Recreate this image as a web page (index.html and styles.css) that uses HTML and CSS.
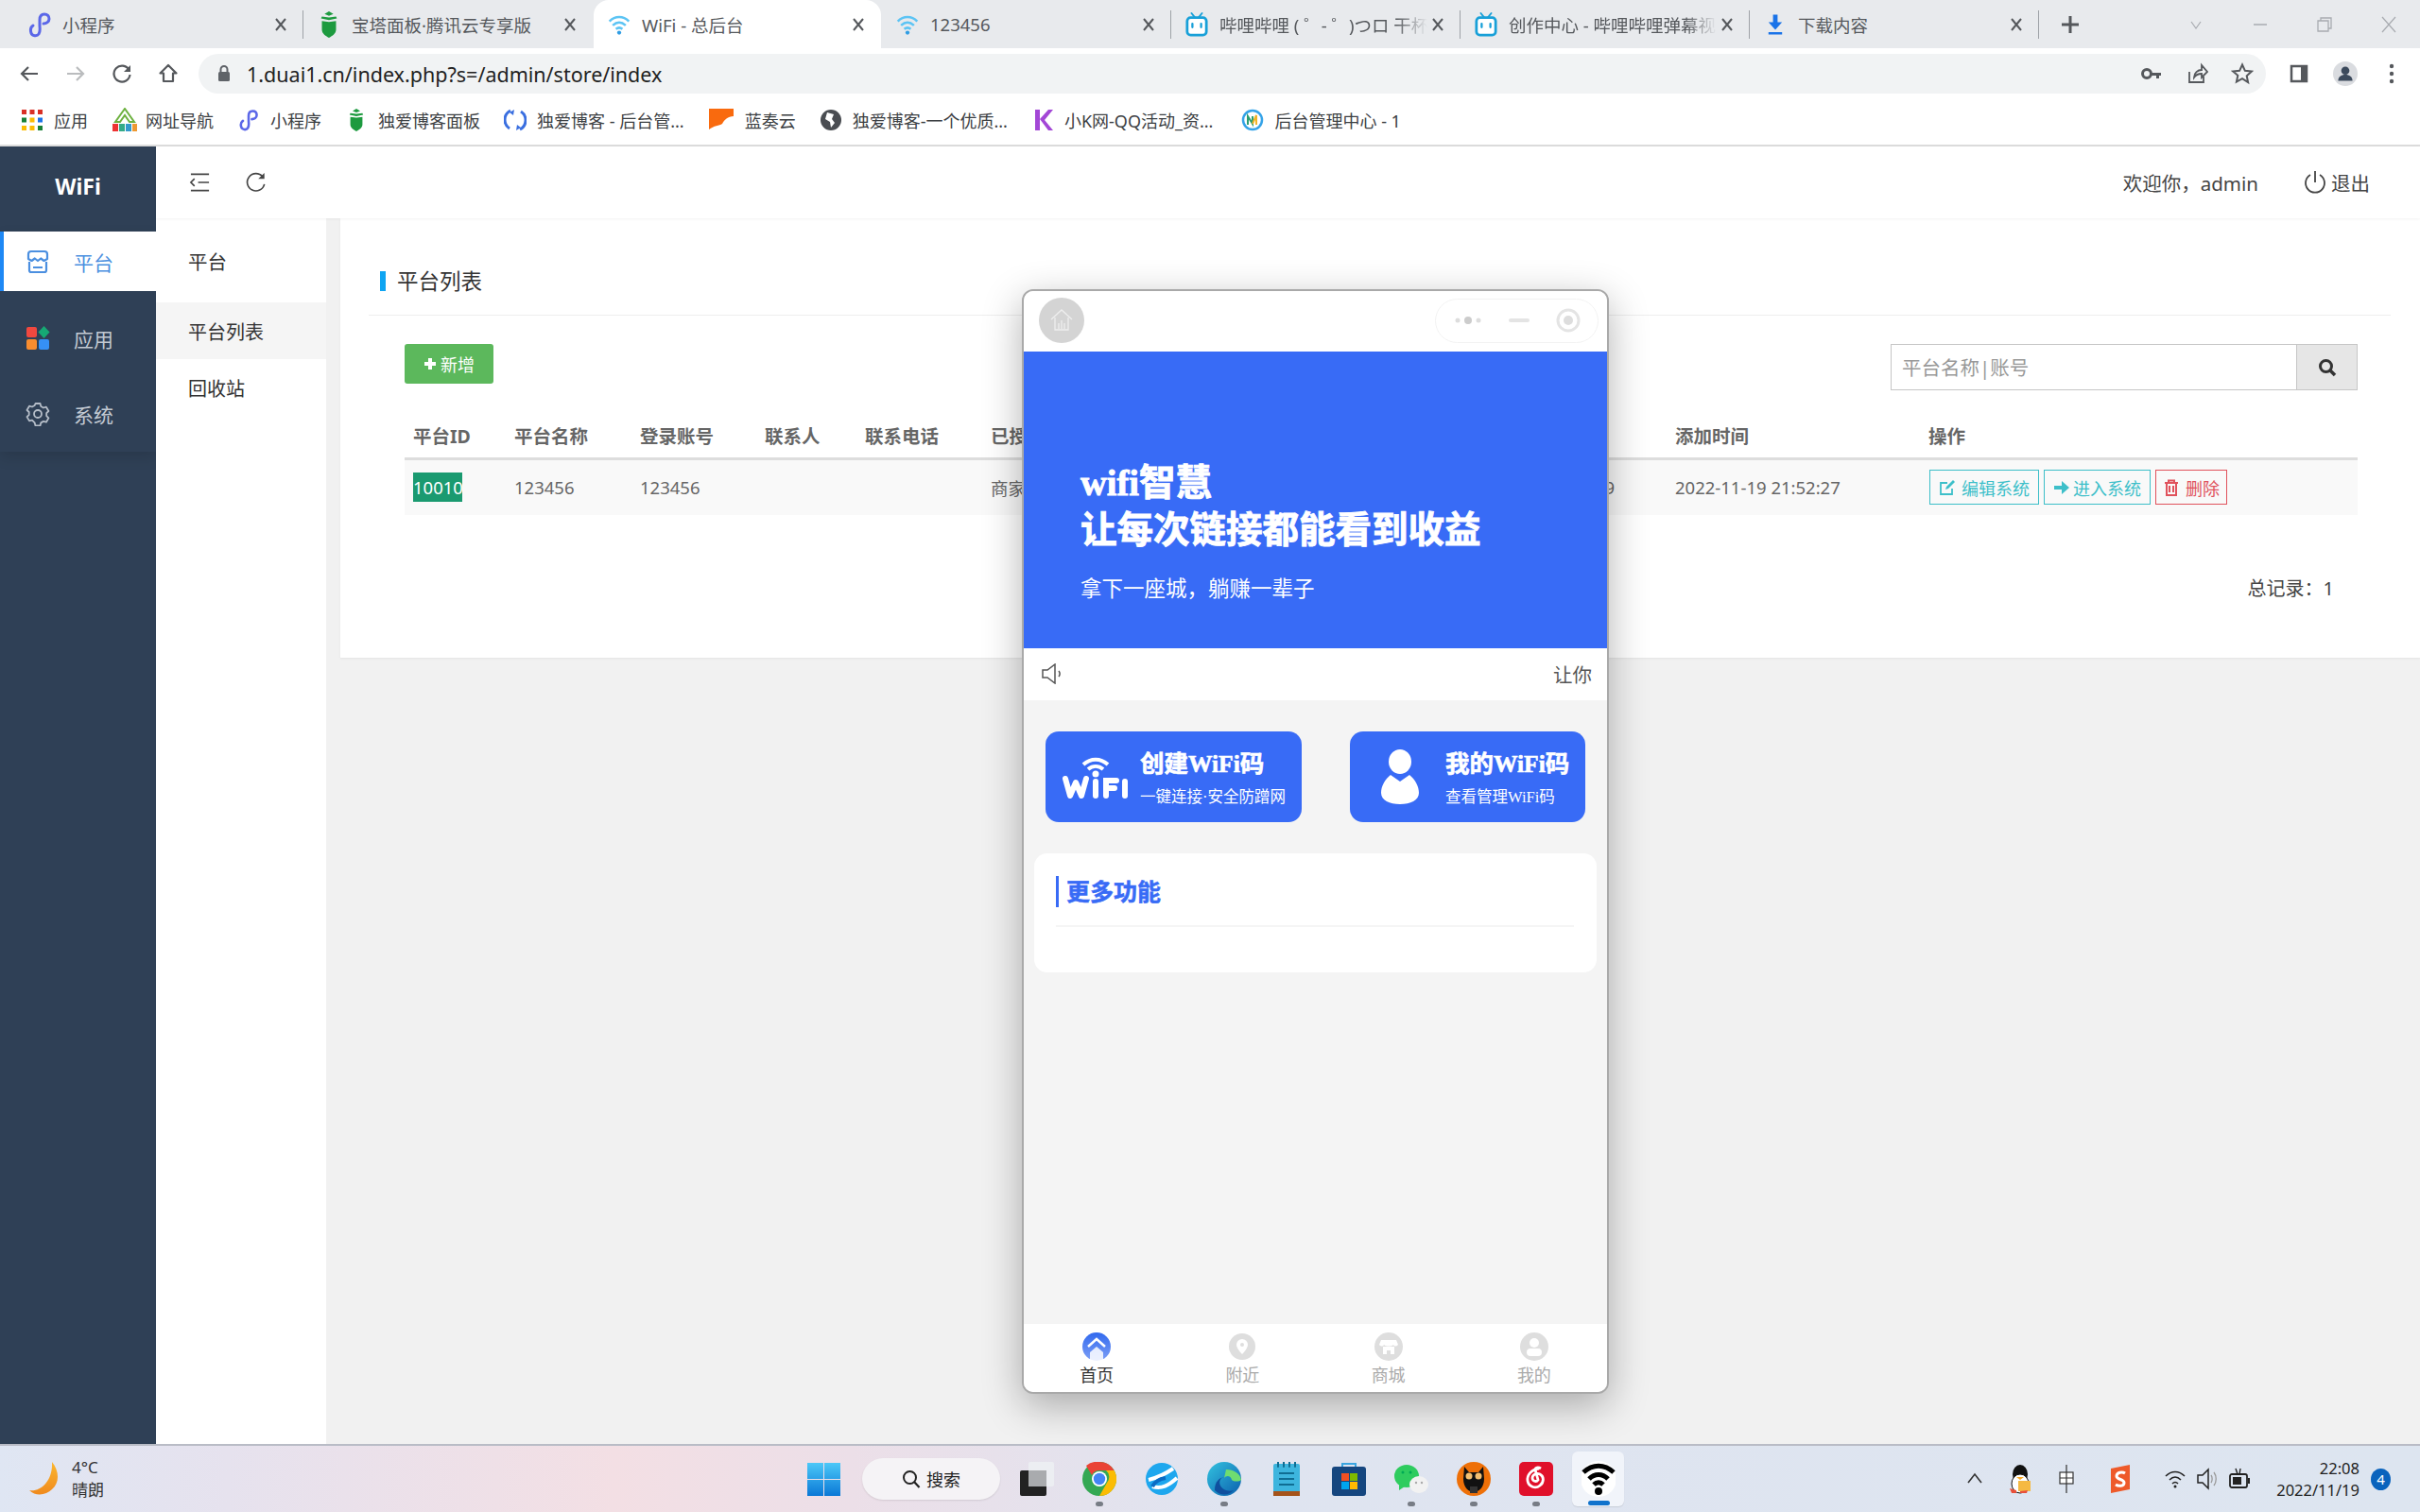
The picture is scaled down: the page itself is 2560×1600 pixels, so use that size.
FILE: index.html
```html
<!DOCTYPE html>
<html lang="zh-CN">
<head>
<meta charset="utf-8">
<title>WiFi - 总后台</title>
<link rel="stylesheet" href="styles.css">
</head>
<body>
<svg class="defs" width="0" height="0">
  <symbol id="x" viewBox="0 0 14 14"><path d="M2 1l10 12M12 1L2 13" fill="none" stroke="#55585c" stroke-width="2"/></symbol>
  <symbol id="mp" viewBox="0 0 24 28"><path d="M5 15c-3 2-3 5-2 8s6 4 8 1 1-6 1-9V9c0-4 2-6 5-6s5 2 5 5-3 5-6 5" fill="none" stroke="#5b67e8" stroke-width="3" stroke-linecap="round"/></symbol>
  <symbol id="shield" viewBox="0 0 24 30"><path d="M12 0l5 3-5 2-5-2zM4 6l8 1 8-1 1 2-9 2-9-2zM4 11l8 1 8-1v10c0 4-4 7-8 9-4-2-8-5-8-9z" fill="#1d9a3f"/></symbol>
  <symbol id="wifi" viewBox="0 0 28 26"><path d="M2 9c7-7 17-7 24 0M6 14c5-4.500 11-4.500 16 0M10 18.500c2.500-2 5.500-2 8 0" fill="none" stroke="#5cc4f4" stroke-width="3"/><circle cx="14" cy="23" r="2.500" fill="#2f9de4"/></symbol>
  <symbol id="bili" viewBox="0 0 26 28"><path d="M7 1l4 5M19 1l-4 5" stroke="#18a0d8" stroke-width="2" stroke-linecap="round"/><rect x="2" y="6" width="22" height="20" rx="4" fill="#fff" stroke="#18a0d8" stroke-width="3"/><path d="M8 13v4M18 13v4" stroke="#18a0d8" stroke-width="2.500" stroke-linecap="round"/></symbol>
</svg>

<div class="browser">
  <div class="tabstrip">
    <div class="tab"><svg class="favicon"><use href="#mp"/></svg><span class="tab-title">小程序</span><svg class="tab-x"><use href="#x"/></svg></div>
    <i class="tab-sep"></i>
    <div class="tab"><svg class="favicon"><use href="#shield"/></svg><span class="tab-title">宝塔面板·腾讯云专享版</span><svg class="tab-x"><use href="#x"/></svg></div>
    <div class="tab tab-active"><svg class="favicon"><use href="#wifi"/></svg><span class="tab-title">WiFi - 总后台</span><svg class="tab-x"><use href="#x"/></svg></div>
    <div class="tab"><svg class="favicon"><use href="#wifi"/></svg><span class="tab-title">123456</span><svg class="tab-x"><use href="#x"/></svg></div>
    <i class="tab-sep"></i>
    <div class="tab"><svg class="favicon"><use href="#bili"/></svg><span class="tab-title tab-fade">哔哩哔哩 ( ゜- ゜)つロ 干杯</span><svg class="tab-x"><use href="#x"/></svg></div>
    <i class="tab-sep"></i>
    <div class="tab"><svg class="favicon"><use href="#bili"/></svg><span class="tab-title tab-fade">创作中心 - 哔哩哔哩弹幕视</span><svg class="tab-x"><use href="#x"/></svg></div>
    <i class="tab-sep"></i>
    <div class="tab"><svg class="favicon" viewBox="-3 -3 30 34"><path d="M9 1h6v10h6l-9 10-9-10h6zM3 24h18v3H3z" fill="#1a73e8"/></svg><span class="tab-title">下载内容</span><svg class="tab-x"><use href="#x"/></svg></div>
    <i class="tab-sep"></i>
    <svg class="new-tab" viewBox="0 0 20 20"><path d="M10 1v18M1 10h18" stroke="#55585c" stroke-width="3"/></svg>
    <div class="win-controls">
      <svg viewBox="0 0 20 20"><path d="M5 7l5 7 5-7" fill="none" stroke="#a8abb0" stroke-width="1.200"/></svg>
      <svg viewBox="0 0 20 20"><path d="M3 10h14" stroke="#a8abb0" stroke-width="1.500"/></svg>
      <svg viewBox="0 0 20 20"><path d="M3 6h11v11H3zM6 6V3h11v11h-3" fill="none" stroke="#a8abb0" stroke-width="1.300"/></svg>
      <svg viewBox="0 0 20 20"><path d="M3 2l14 16M17 2L3 18" stroke="#a8abb0" stroke-width="1.200"/></svg>
    </div>
  </div>

  <div class="toolbar">
    <svg class="tool" viewBox="0 0 24 24"><path d="M21 12H4M11 5l-7 7 7 7" fill="none" stroke="#55585c" stroke-width="2.200"/></svg>
    <svg class="tool" viewBox="0 0 24 24"><path d="M3 12h17M13 5l7 7-7 7" fill="none" stroke="#babcbe" stroke-width="2.200"/></svg>
    <svg class="tool" viewBox="0 0 24 24"><path d="M19.500 8A8.500 8.500 0 1 0 20.500 13" fill="none" stroke="#55585c" stroke-width="2.200"/><path d="M21 3v7h-7z" fill="#55585c"/></svg>
    <svg class="tool" viewBox="0 0 24 24"><path d="M12 3L3.500 11.500H7V20h10v-8.500h3.500z" fill="none" stroke="#55585c" stroke-width="2.200" stroke-linejoin="round"/></svg>
    <div class="omnibox">
      <svg class="lock" viewBox="0 0 16 20"><path d="M4.500 8V5.500a3.500 3.500 0 0 1 7 0V8" fill="none" stroke="#5f6368" stroke-width="2"/><rect x="2" y="8" width="12" height="10" rx="1.500" fill="#5f6368"/></svg>
      <span class="url">1.duai1.cn/index.php?s=/admin/store/index</span>
      <svg class="omni-icon" viewBox="0 0 24 24"><circle cx="7" cy="12" r="4.500" fill="none" stroke="#55585c" stroke-width="3"/><path d="M11 11h11v3h-2v3h-3v-3h-6z" fill="#55585c"/></svg>
      <svg class="omni-icon" viewBox="0 0 24 24"><path d="M4 10v11h15v-6M9 16c0-5 4-8 8-8V3l6 7-6 6v-4c-3 0-6 1-8 4z" fill="none" stroke="#55585c" stroke-width="1.800"/></svg>
      <svg class="omni-icon" viewBox="0 0 24 24"><path d="M12 2.500l2.900 6.300 6.900.8-5.100 4.700 1.400 6.800L12 17.200 5.900 20.600l1.400-6.800L2.200 9.600l6.900-.8z" fill="none" stroke="#55585c" stroke-width="2"/></svg>
    </div>
    <svg class="tool" viewBox="0 0 24 24"><rect x="4" y="4" width="16" height="16" fill="none" stroke="#55585c" stroke-width="2.500"/><rect x="14" y="4" width="6" height="16" fill="#55585c"/></svg>
    <svg class="tool tool-avatar" viewBox="0 0 24 24"><circle cx="12" cy="12" r="12" fill="#dadce0"/><circle cx="12" cy="9" r="4" fill="#3c4a5c"/><path d="M5 19c0-4 3-6 7-6s7 2 7 6z" fill="#3c4a5c"/></svg>
    <svg class="tool" viewBox="0 0 24 24"><circle cx="12" cy="4" r="2.200" fill="#55585c"/><circle cx="12" cy="12" r="2.200" fill="#55585c"/><circle cx="12" cy="20" r="2.200" fill="#55585c"/></svg>
  </div>

  <div class="bookmarks">
    <a class="bm"><svg class="bm-icon" viewBox="0 0 24 24"><g fill="#d93025"><rect x="1" y="1" width="5" height="5"/><rect x="9.500" y="1" width="5" height="5"/><rect x="18" y="1" width="5" height="5"/></g><g fill="#188038"><rect x="1" y="9.500" width="5" height="5"/></g><g fill="#fbbc04"><rect x="9.500" y="9.500" width="5" height="5"/><rect x="1" y="18" width="5" height="5"/><rect x="9.500" y="18" width="5" height="5"/></g><rect x="18" y="9.500" width="5" height="5" fill="#1a73e8"/><rect x="18" y="18" width="5" height="5" fill="#188038"/></svg>应用</a>
    <a class="bm bm-tight"><svg class="bm-icon bm-wide" viewBox="0 0 28 26"><path d="M14 1L4 15h5l5-7 5 7h5z" fill="none" stroke="#6db13f" stroke-width="2"/><rect x="1" y="17" width="6" height="8" fill="#e33"/><rect x="8" y="17" width="6" height="8" fill="#3a8"/><rect x="15" y="17" width="6" height="8" fill="#39c"/><rect x="22" y="17" width="5" height="8" fill="#e93"/></svg>网址导航</a>
    <a class="bm"><svg class="bm-icon"><use href="#mp"/></svg>小程序</a>
    <a class="bm"><svg class="bm-icon"><use href="#shield"/></svg>独爱博客面板</a>
    <a class="bm"><svg class="bm-icon" viewBox="0 0 24 24"><path d="M7 2A11 11 0 0 0 6 21M17 22a11 11 0 0 0 1-19" fill="none" stroke="#3a6fe0" stroke-width="3"/><path d="M11 1l-5 3 4 3zM13 23l5-3-4-3z" fill="#3a6fe0"/></svg>独爱博客 - 后台管...</a>
    <a class="bm"><svg class="bm-icon bm-wide" viewBox="0 0 28 26"><path d="M1 1h26v8c-6 0-10 4-12 8-3 2-9 2-14 6z" fill="#f96a0e"/></svg>蓝奏云</a>
    <a class="bm"><svg class="bm-icon" viewBox="0 0 24 24"><circle cx="12" cy="12" r="11" fill="#4a4d52"/><path d="M8 4l7 2-2 5 3 4-4 5-1-6-5-3z" fill="#fff"/></svg>独爱博客-一个优质...</a>
    <a class="bm"><svg class="bm-icon" viewBox="0 0 24 24"><path d="M4 1h5v22H4zM9 11l9-10h5L14 12l9 11h-5z" fill="#a347d6"/></svg>小K网-QQ活动_资...</a>
    <a class="bm bm-last"><svg class="bm-icon" viewBox="0 0 24 24"><circle cx="12" cy="12" r="10" fill="none" stroke="#35a3e8" stroke-width="2.500"/><path d="M7 17V8l5 8V8" fill="none" stroke="#2a9d70" stroke-width="2"/><path d="M12 16l4-9v10" fill="none" stroke="#f0b429" stroke-width="2"/></svg>后台管理中心 - 1</a>
  </div>
</div>

<div class="app">
  <aside class="sidebar">
    <div class="logo">WiFi</div>
    <div class="side-group">
      <a class="side-item side-active">
        <svg class="side-icon" viewBox="0 0 24 26"><path d="M5 2h14a3 3 0 0 1 3 3v5l-3.500 2-3.300-2.500L12 12 8.800 9.500 5.500 12 2 10V5a3 3 0 0 1 3-3zM3 13v9a2 2 0 0 0 2 2h14a2 2 0 0 0 2-2v-9M7 19h10" fill="none" stroke="#4b8fe0" stroke-width="2.200" stroke-linejoin="round"/></svg>
        <span>平台</span>
      </a>
      <a class="side-item">
        <svg class="side-icon" viewBox="0 0 26 26"><rect x="1" y="1" width="11" height="11" rx="2" fill="#f1483f"/><path d="M19.500 0l6 6.500-6 6.500-6-6.500z" fill="#16a974"/><rect x="1" y="14" width="11" height="11" rx="2" fill="#f98d2f"/><rect x="14" y="14" width="11" height="11" rx="2" fill="#3690f5"/></svg>
        <span>应用</span>
      </a>
      <a class="side-item">
        <svg class="side-icon" viewBox="0 0 26 26"><path d="M10.500 2h5l.8 3 2.600 1.500 3-.8 2.500 4.300-2.200 2.200v3l2.200 2.200-2.500 4.300-3-.8-2.600 1.500-.8 3h-5l-.8-3L7 19.600l-3 .8-2.500-4.300L3.700 14v-3L1.500 9 4 4.700l3 .8 2.700-1.500z" fill="none" stroke="#b5bdc8" stroke-width="1.800" stroke-linejoin="round"/><circle cx="13" cy="13" r="4" fill="none" stroke="#b5bdc8" stroke-width="1.800"/></svg>
        <span>系统</span>
      </a>
    </div>
  </aside>

  <div class="main">
    <header class="topbar">
      <svg class="top-icon" viewBox="0 0 24 22"><path d="M2 2h20M10 11h12M2 20h20M6 7l-4 4 4 4" fill="none" stroke="#444" stroke-width="1.700"/></svg>
      <svg class="top-icon" viewBox="0 0 24 24"><path d="M20 5.500A10 10 0 1 0 22 14" fill="none" stroke="#444" stroke-width="1.800"/><path d="M22 1v7h-7z" fill="#444"/></svg>
      <span class="welcome">欢迎你，admin</span>
      <a class="logout"><svg viewBox="0 0 24 26"><path d="M7 5a10 10 0 1 0 10 0M12 1v12" fill="none" stroke="#444" stroke-width="1.800"/></svg>退出</a>
    </header>

    <div class="work">
      <nav class="subnav">
        <div class="sub-head">平台</div>
        <a class="sub-item sub-active">平台列表</a>
        <a class="sub-item">回收站</a>
      </nav>

      <div class="content">
        <section class="card">
          <div class="card-title"><span>平台列表</span></div>
          <div class="card-body">
            <div class="actions">
              <a class="btn-add"><svg viewBox="0 0 14 14"><path d="M7 1v12M1 7h12" stroke="#fff" stroke-width="4"/></svg>新增</a>
              <div class="search">
                <input class="search-input" placeholder="平台名称|账号">
                <a class="search-btn"><svg viewBox="0 0 20 20"><circle cx="8.500" cy="8.500" r="6" fill="none" stroke="#333" stroke-width="3"/><path d="M13 13l5 5" stroke="#333" stroke-width="3.500"/></svg></a>
              </div>
            </div>
            <table class="grid">
              <colgroup><col class="c1"><col class="c2"><col class="c3"><col class="c4"><col class="c5"><col class="c6"><col class="c7"><col class="c8"><col></colgroup>
              <thead>
                <tr><th>平台ID</th><th>平台名称</th><th>登录账号</th><th>联系人</th><th>联系电话</th><th>已授权应用</th><th></th><th>添加时间</th><th>操作</th></tr>
              </thead>
              <tbody>
                <tr>
                  <td><span class="id-mark">10010</span></td><td>123456</td><td>123456</td><td></td><td></td><td>商家</td><td class="td-end">9</td><td>2022-11-19 21:52:27</td>
                  <td><div class="ops">
                    <a class="op op-edit"><svg viewBox="0 0 18 18"><path d="M14 10v6H2V4h7" fill="none" stroke="#3dbfc9" stroke-width="1.800"/><path d="M7 11l1-3 7-7 2 2-7 7z" fill="#3dbfc9"/></svg>编辑系统</a>
                    <a class="op op-enter"><svg viewBox="0 0 18 18"><path d="M1 7h8V2l8 7-8 7v-5H1z" fill="#3dbfc9"/></svg>进入系统</a>
                    <a class="op op-del"><svg viewBox="0 0 18 18"><path d="M2 4h14M6 4V1.500h6V4M4 4v13h10V4" fill="none" stroke="#e0525c" stroke-width="2"/><path d="M7 7v7M11 7v7" stroke="#e0525c" stroke-width="2"/></svg>删除</a>
                  </div></td>
                </tr>
              </tbody>
            </table>
            <div class="total">总记录：1</div>
          </div>
        </section>
      </div>
    </div>
  </div>
</div>

<div class="phone">
  <div class="ph-head">
    <div class="ph-home"><svg viewBox="0 0 30 30"><path d="M4 14L15 4l11 10M8 12v13h14V12M8 25h14M12 24v-6M15 24v-9M18 24v-6" fill="none" stroke="#eee" stroke-width="1.300"/></svg></div>
    <div class="ph-capsule">
      <svg viewBox="0 0 30 12"><circle cx="4" cy="6" r="2.500" fill="#ddd"/><circle cx="15" cy="6" r="4" fill="#ccc"/><circle cx="26" cy="6" r="2.500" fill="#ddd"/></svg>
      <i class="cap-line"></i>
      <svg viewBox="0 0 26 26"><circle cx="13" cy="13" r="11" fill="none" stroke="#e4e4e4" stroke-width="3"/><circle cx="13" cy="13" r="5" fill="#ddd"/></svg>
    </div>
  </div>
  <div class="ph-banner">
    <h1>wifi智慧<br>让每次链接都能看到收益</h1>
    <p>拿下一座城，躺赚一辈子</p>
  </div>
  <div class="ph-notice">
    <svg viewBox="0 0 24 22"><path d="M1 7h5l8-6v20l-8-6H1z" fill="none" stroke="#555" stroke-width="1.500"/><path d="M18 8c1.500 2 1.500 4 0 6" fill="none" stroke="#555" stroke-width="1.500"/></svg>
    <span>让你</span>
  </div>
  <div class="ph-body">
    <div class="ph-btns">
      <a class="ph-btn ph-btn-a">
        <svg class="wifi-word" viewBox="0 0 70 46"><path d="M22 9c8-7 18-7 26 0M27 14c5-4 11-4 16 0" fill="none" stroke="#fff" stroke-width="4"/><circle cx="35" cy="19" r="3.500" fill="#fff"/><path d="M3 24l5 18 6-14 6 14 5-18" fill="none" stroke="#fff" stroke-width="6" stroke-linejoin="round" stroke-linecap="round"/><path d="M35 27v15M46 42V26h11M46 34h9M66 27v15" fill="none" stroke="#fff" stroke-width="6" stroke-linecap="round"/></svg>
        <span class="ph-btn-text"><b>创建WiFi码</b><small>一键连接·安全防蹭网</small></span>
      </a>
      <a class="ph-btn ph-btn-b">
        <svg class="person" viewBox="0 0 40 58"><ellipse cx="20" cy="13" rx="12" ry="13" fill="#fff"/><path d="M10 27l10 7 10-7c6 5 10 12 10 19 0 8-9 12-20 12S0 54 0 46c0-7 4-14 10-19z" fill="#fff"/></svg>
        <span class="ph-btn-text"><b>我的WiFi码</b><small>查看管理WiFi码</small></span>
      </a>
    </div>
    <div class="ph-card">
      <div class="ph-card-title"><span>更多功能</span></div>
    </div>
  </div>
  <div class="ph-tabs">
    <a class="ph-tab ph-tab-on">
      <svg viewBox="0 0 30 30"><defs><linearGradient id="g" x1="0" y1="0" x2="0" y2="1"><stop offset="0" stop-color="#3169ee"/><stop offset="1" stop-color="#7fa0f6"/></linearGradient></defs><circle cx="15" cy="15" r="15" fill="url(#g)"/><path d="M6 15l9-8 9 8" fill="none" stroke="#fff" stroke-width="2.500"/><path d="M8 21l7-6 7 6v9H8z" fill="#fff" opacity=".85"/></svg>
      <span>首页</span>
    </a>
    <a class="ph-tab">
      <svg viewBox="0 0 30 30"><circle cx="15" cy="15" r="14" fill="#dedede"/><path d="M15 7a6 6 0 0 1 6 6c0 4-6 10-6 10s-6-6-6-10a6 6 0 0 1 6-6z" fill="#fff"/><circle cx="15" cy="13" r="2" fill="#dedede"/></svg>
      <span>附近</span>
    </a>
    <a class="ph-tab">
      <svg viewBox="0 0 30 30"><circle cx="15" cy="15" r="15" fill="#dedede"/><path d="M7 8h16l2 5c-2 2-4 2-5 0-2 2-8 2-10 0-1 2-3 2-5 0zM9 15h12v8h-4v-4h-4v4H9z" fill="#fff"/></svg>
      <span>商城</span>
    </a>
    <a class="ph-tab">
      <svg viewBox="0 0 30 30"><circle cx="15" cy="15" r="15" fill="#dedede"/><circle cx="15" cy="11" r="5" fill="#fff"/><rect x="7" y="17" width="16" height="8" rx="4" fill="#fff"/></svg>
      <span>我的</span>
    </a>
  </div>
</div>

<footer class="taskbar">
  <div class="weather">
    <svg viewBox="0 0 32 36"><defs><linearGradient id="m" x1="0" y1="0" x2="0" y2="1"><stop offset="0" stop-color="#fbb72e"/><stop offset="1" stop-color="#f08a1d"/></linearGradient></defs><path d="M24 0c8 10 8 22 0 29-6 6-17 8-24 1 12 2 25-10 24-30z" fill="url(#m)"/></svg>
    <div class="weather-text"><span>4°C</span><span>晴朗</span></div>
  </div>
  <div class="task-center">
    <svg class="win-logo" viewBox="0 0 35 35"><defs><linearGradient id="w" x1="0" y1="0" x2="0" y2="1"><stop offset="0" stop-color="#4cc8f8"/><stop offset="1" stop-color="#0a78d6"/></linearGradient></defs><path d="M0 0h17v17H0zM18 0h17v17H18zM0 18h17v17H0zM18 18h17v17H18z" fill="url(#w)"/></svg>
    <div class="task-search"><svg viewBox="0 0 20 20"><circle cx="8.500" cy="8.500" r="6.500" fill="none" stroke="#222" stroke-width="2"/><path d="M13 13l5.500 6" stroke="#222" stroke-width="2.200"/></svg>搜索</div>
    <div class="slot"><svg viewBox="0 0 36 36"><rect x="0" y="9" width="28" height="27" rx="2" fill="#222"/><rect x="9" y="0" width="27" height="26" rx="2" fill="#eceef2"/><rect x="9" y="9" width="19" height="17" fill="#a9abae"/></svg></div>
    <div class="slot slot-run"><svg viewBox="0 0 36 36"><circle cx="18" cy="18" r="18" fill="#34a853"/><path d="M18 0a18 18 0 0 1 15.600 9H18A9 9 0 0 0 10 14L4 4A18 18 0 0 1 18 0z" fill="#ea4335"/><path d="M33.600 9A18 18 0 0 1 18 36l8-14a9 9 0 0 0-1-13z" fill="#fbbc04"/><circle cx="18" cy="18" r="8" fill="#fff"/><circle cx="18" cy="18" r="6.200" fill="#4285f4"/></svg></div>
    <div class="slot"><svg viewBox="0 0 36 36"><circle cx="18" cy="18" r="17" fill="#1ea7ee"/><path d="M4 19c8-2 16-5 26-12M8 26c10 3 17-1 26-9" fill="none" stroke="#fff" stroke-width="4"/><path d="M8 26c3-6 8-8 14-9" fill="none" stroke="#0b6cc4" stroke-width="4"/></svg></div>
    <div class="slot slot-run"><svg viewBox="0 0 36 36"><defs><linearGradient id="e" x1="0" y1="0" x2="1" y2="1"><stop offset="0" stop-color="#33c3e0"/><stop offset="1" stop-color="#0b5fad"/></linearGradient></defs><circle cx="18" cy="18" r="18" fill="url(#e)"/><path d="M20 8c8 0 15 4 16 11-2 2-8 2-10 0-1-5-6-5-8-2z" fill="#6fdc70"/><path d="M19 16c-5 0-7 5-5 9s8 7 14 5c-6 6-14 6-20 0 0-9 5-14 11-14z" fill="#0f4f9e"/></svg></div>
    <div class="slot"><svg viewBox="0 0 28 36"><rect x="0" y="2" width="28" height="34" rx="2" fill="#3db5de"/><rect x="0" y="31" width="28" height="5" fill="#a5531a"/><path d="M6 12h16M6 18h16M6 24h16" stroke="#0f6d93" stroke-width="2"/><path d="M5 0v5M11 0v5M17 0v5M23 0v5" stroke="#0f6d93" stroke-width="2" stroke-linecap="round"/></svg></div>
    <div class="slot"><svg viewBox="0 0 36 36"><path d="M11 6V2h14v4" fill="none" stroke="#3aa5e0" stroke-width="2"/><rect x="0" y="5" width="36" height="31" rx="3" fill="#15467f"/><rect x="10" y="12" width="8" height="8" fill="#f25022"/><rect x="19" y="12" width="8" height="8" fill="#7fba00"/><rect x="10" y="21" width="8" height="8" fill="#00a4ef"/><rect x="19" y="21" width="8" height="8" fill="#ffb900"/></svg></div>
    <div class="slot slot-run"><svg viewBox="0 0 36 36"><ellipse cx="13" cy="15" rx="13" ry="12" fill="#2ecc5f"/><path d="M5 24l0 6 6-4z" fill="#2ecc5f"/><circle cx="9" cy="11" r="1.500" fill="#0a5"/><circle cx="17" cy="11" r="1.500" fill="#0a5"/><ellipse cx="26" cy="24" rx="10" ry="9" fill="#f2f2f2"/><circle cx="23" cy="22" r="1.200" fill="#aaa"/><circle cx="29" cy="22" r="1.200" fill="#aaa"/></svg></div>
    <div class="slot slot-run"><svg viewBox="0 0 36 36"><circle cx="18" cy="18" r="18" fill="#ee7008"/><path d="M8 5l5 6h10l5-6 1 13c0 9-6 14-11 14S7 27 7 18z" fill="#111"/><circle cx="13" cy="15" r="3.500" fill="#f4c071"/><circle cx="23" cy="15" r="3.500" fill="#f4c071"/><rect x="14" y="26" width="8" height="7" fill="#333"/></svg></div>
    <div class="slot slot-run"><svg viewBox="0 0 36 36"><rect width="36" height="36" rx="5" fill="#e0102a"/><path d="M21 7c-8 1-13 7-12 13s8 9 13 5 4-10 0-12-8 1-8 4 4 5 6 2l-3-11c0-2 3-3 6-1" fill="none" stroke="#fff" stroke-width="2.800"/></svg></div>
    <div class="slot slot-active"><svg viewBox="0 0 36 40"><circle cx="18" cy="20" r="19" fill="#fff"/><path d="M2 13c10-9 22-9 32 0M8 20c6-6 14-6 20 0M13 26c3-3 7-3 10 0" fill="none" stroke="#000" stroke-width="5"/><circle cx="18" cy="33" r="4" fill="#000"/></svg></div>
  </div>
  <div class="tray">
    <svg class="tray-icon tray-caret" viewBox="0 0 20 20"><path d="M3 14l7-9 7 9" fill="none" stroke="#333" stroke-width="1.600"/></svg>
    <svg class="tray-icon" viewBox="0 0 24 32"><ellipse cx="12" cy="11" rx="8" ry="10" fill="#111"/><ellipse cx="12" cy="21" rx="9" ry="10" fill="#fff" stroke="#111"/><path d="M8 14h8l-4 3z" fill="#f5a623"/><rect x="10" y="18" width="13" height="11" fill="#f5b942"/><path d="M1 26l7 2v3H3zM12 29l8-1-1 3h-7z" fill="#e8503a"/></svg>
    <svg class="tray-icon tray-zh" viewBox="0 0 24 32"><rect x="5" y="9" width="14" height="12" fill="#fff" stroke="#333" stroke-width="1.200"/><path d="M12 1v30M5 15h14" stroke="#333" stroke-width="1.200"/></svg>
    <svg class="tray-icon" viewBox="0 0 24 32"><path d="M2 5l20-4v26L2 31z" fill="#ee5a2a"/><path d="M17 10c-3-2-9-1-9 3s8 3 8 7-6 4-9 2" fill="none" stroke="#fff" stroke-width="3"/></svg>
    <svg class="tray-icon tray-wifi" viewBox="0 0 24 24"><path d="M2 9c6-6 14-6 20 0M6 13c4-4 8-4 12 0M9 17c2-2 4-2 6 0" fill="none" stroke="#222" stroke-width="1.600"/><circle cx="12" cy="20" r="1.500" fill="#222"/></svg>
    <svg class="tray-icon" viewBox="0 0 24 24"><path d="M2 8h5l6-6v20l-6-6H2z" fill="none" stroke="#222" stroke-width="1.500"/><path d="M16 8c1.500 2 1.500 6 0 8M19 5c3 4 3 10 0 14" fill="none" stroke="#999" stroke-width="1.300"/></svg>
    <svg class="tray-icon" viewBox="0 0 24 24"><rect x="2" y="7" width="18" height="14" rx="2" fill="none" stroke="#222" stroke-width="1.800"/><rect x="21" y="11" width="2" height="6" fill="#222"/><rect x="5" y="10" width="9" height="8" fill="#222"/><path d="M8 1l2 6M13 1l-1 6" stroke="#222" stroke-width="1.400"/></svg>
    <div class="clock"><span>22:08</span><span>2022/11/19</span></div>
    <span class="badge">4</span>
  </div>
</footer>
</body>
</html>
```

FILE: styles.css
```css
* { box-sizing: border-box; }
html, body { margin: 0; padding: 0; }
body {
  position: relative;
  width: 2560px;
  height: 1600px;
  overflow: hidden;
  display: flex;
  flex-direction: column;
  background: #f1f1f1;
  color: #444;
  font-family: "Noto Sans", "Noto Sans CJK SC", sans-serif;
}
a { color: inherit; text-decoration: none; }
.defs { position: absolute; }

/* Browser chrome */
.browser { height: 155px; flex: none; background: #fff; border-bottom: 2px solid #dcdcdc; }
.tabstrip { height: 51px; background: #e8eaed; display: flex; align-items: center; padding-left: 15px; }
.tab { width: 306px; height: 51px; display: flex; align-items: center; padding: 0 17px 0 15px; font-size: 18.5px; color: #55585c; flex: none; }
.tab-active { background: #fff; border-radius: 16px 16px 0 0; width: 304px; margin-right: 1px; margin-left: 1px; }
.tab-sep { width: 1px; height: 30px; background: #9ea2a7; flex: none; margin-left: -1px; }
.favicon { width: 24px; height: 28px; flex: none; margin-right: 12px; }
.tab-title { flex: 1; white-space: nowrap; overflow: hidden; }
.tab-fade { -webkit-mask-image: linear-gradient(90deg, #000 85%, transparent); mask-image: linear-gradient(90deg, #000 85%, transparent); }
.tab-x { width: 14px; height: 14px; flex: none; margin-left: 4px; }
.new-tab { width: 20px; height: 20px; margin-left: 23px; flex: none; }
.win-controls { margin-left: auto; display: flex; gap: 48px; padding-right: 23px; }
.win-controls svg { width: 20px; height: 20px; }

.toolbar { height: 49px; display: flex; align-items: center; padding: 5px 6px 0 6px; }
.tool { width: 24px; height: 24px; margin: 0 12.500px; flex: none; }
.tool-avatar { width: 26px; height: 26px; margin: 0 11.500px; }
.omnibox { flex: 1; height: 42px; margin: 0 10px 0 8px; border-radius: 21px; background: #f1f3f4; display: flex; align-items: center; padding: 0 13px 0 19px; }
.lock { width: 16px; height: 20px; }
.url { flex: 1; margin-left: 16px; font-size: 21.500px; color: #222; }
.omni-icon { width: 24px; height: 24px; margin-left: 24px; }

.bookmarks { height: 53px; display: flex; align-items: center; gap: 25px; padding-left: 22px; font-size: 18px; color: #3c4043; white-space: nowrap; }
.bm { display: flex; align-items: center; gap: 11px; }
.bm-tight { gap: 8px; }
.bm-last { margin-left: 5px; }
.bm-icon { width: 24px; height: 24px; flex: none; }
.bm-wide { width: 28px; height: 26px; }

/* Admin shell */
.app { flex: 1; display: flex; min-height: 0; }
.sidebar { width: 165px; flex: none; background: #2f4056; }
.logo { height: 90px; display: flex; align-items: center; justify-content: center; padding-bottom: 6px; color: #fff; font-size: 23px; font-weight: 700; }
.side-group { padding-bottom: 10px; box-shadow: 0 6px 14px rgba(0, 0, 0, .12); display: flex; flex-direction: column; gap: 20px; }
.side-item { height: 60px; display: flex; align-items: center; padding-left: 27px; color: #c2c9d2; font-size: 21px; gap: 25px; }
.side-active { height: 63px; background: #fff; color: #4b8fe0; border-left: 4px solid #1e88f5; padding-left: 23px; }
.side-icon { width: 26px; height: 26px; flex: none; }

.main { flex: 1; display: flex; flex-direction: column; min-width: 0; }
.topbar { height: 76px; flex: none; background: #fff; display: flex; align-items: center; padding: 0 53px 0 35px; box-shadow: 0 1px 3px rgba(0, 0, 0, .05); position: relative; color: #444; font-size: 20.500px; }
.top-icon { width: 23px; height: 22px; margin-right: 36px; }
.welcome { margin-left: auto; }
.logout { margin-left: 48px; display: flex; align-items: center; gap: 5px; }
.logout svg { width: 24px; height: 26px; }

.work { flex: 1; display: flex; min-height: 0; }
.subnav { width: 180px; flex: none; background: #fff; font-size: 20px; color: #333; }
.sub-head { height: 89px; display: flex; align-items: center; padding: 1px 0 0 34px; font-size: 20.500px; }
.sub-item { height: 60px; display: flex; align-items: center; padding-left: 34px; }
.sub-active { background: #f5f5f5; }
.content { flex: 1; padding-left: 15px; min-width: 0; }
.card { background: #fff; height: 465px; box-shadow: 0 1px 2px rgba(0, 0, 0, .06); }
.card-title { margin: 0 31px 0 30px; padding: 56px 0 25px 12px; border-bottom: 1px solid #eee; }
.card-title span { display: block; border-left: 6px solid #0fa5f2; padding-left: 12px; font-size: 22.500px; line-height: 21px; color: #333; }
.card-body { padding: 30px 66px 0 68px; }
.actions { display: flex; justify-content: space-between; align-items: flex-start; }
.btn-add { width: 94px; height: 42px; border-radius: 3px; background: #5cb85c; color: #fff; font-size: 18px; display: flex; align-items: center; justify-content: center; gap: 4px; }
.btn-add svg { width: 14px; height: 14px; }
.search { display: flex; width: 494px; height: 49px; border: 1px solid #c6c6c6; }
.search-input { flex: 1; min-width: 0; border: 0; padding: 0 11px; font: inherit; font-size: 20.500px; background: #fff; }
.search-input::placeholder { color: #999; }
.search-btn { width: 64px; background: #e6e6e6; border-left: 1px solid #c6c6c6; display: flex; align-items: center; justify-content: center; }
.search-btn svg { width: 20px; height: 20px; }

.grid { width: 2066px; margin-top: 26px; border-collapse: collapse; table-layout: fixed; font-size: 18.500px; color: #666; }
.grid th { height: 46px; padding: 0 0 2px 9px; text-align: left; font-size: 19.500px; font-weight: 700; color: #666; border-bottom: 3px solid #ddd; white-space: nowrap; overflow: hidden; }
.grid td { height: 60px; padding: 0 0 0 9px; background: #f9f9f9; white-space: nowrap; vertical-align: middle; }
.c1 { width: 107px; } .c2 { width: 133px; } .c3 { width: 132px; } .c4 { width: 106px; } .c5 { width: 133px; }
.c6 { width: 361px; } .c7 { width: 363px; } .c8 { width: 268px; }
.grid .td-end { text-align: right; padding-right: 55px; }
.id-mark { display: block; width: 52px; height: 31px; line-height: 31px; background: #1a9a70; color: #fff; overflow: hidden; }
.ops { display: flex; gap: 5px; padding-left: 1px; }
.op { height: 37px; border: 1px solid; display: flex; align-items: center; justify-content: center; gap: 6px; font-size: 18px; color: #3dbfc9; }
.op svg { width: 18px; height: 18px; flex: none; }
.op-edit { width: 116px; }
.op-enter { width: 113px; gap: 3px; }
.op-del { width: 76px; color: #e0525c; }
.total { margin-top: 63px; line-height: 30px; text-align: right; padding-right: 25px; font-size: 20px; color: #444; }

/* Phone preview window, floating over the admin page */
.phone { position: absolute; left: 1081px; top: 306px; width: 621px; height: 1169px; border: 2px solid #a9a9a9; border-radius: 12px; background: #f4f4f4; overflow: hidden; display: flex; flex-direction: column; box-shadow: 0 12px 42px rgba(0, 0, 0, .3); }
.ph-head { height: 64px; flex: none; background: #fff; display: flex; align-items: center; justify-content: space-between; padding: 0 9px 2px 16px; }
.ph-home { width: 48px; height: 48px; border-radius: 50%; background: #d4d4d4; display: flex; align-items: center; justify-content: center; }
.ph-home svg { width: 30px; height: 30px; }
.ph-capsule { width: 173px; height: 47px; border: 1px solid #f2f2f2; border-radius: 24px; display: flex; align-items: center; justify-content: space-between; padding: 0 18px 0 19px; }
.ph-capsule svg:first-child { width: 30px; height: 12px; }
.ph-capsule svg:last-child { width: 26px; height: 26px; }
.cap-line { width: 22px; height: 4px; background: #e4e4e4; border-radius: 2px; }
.ph-banner { height: 314px; flex: none; background: #386bf6; color: #fff; padding: 114px 0 0 60px; }
.ph-banner h1 { margin: 0; font-family: "Liberation Serif", "Noto Sans CJK SC", serif; font-size: 38.500px; line-height: 50px; font-weight: 700; -webkit-text-stroke: .9px #fff; }
.ph-banner p { margin: 19px 0 0; font-size: 22.500px; line-height: 32px; font-family: "Noto Sans CJK SC", sans-serif; }
.ph-notice { height: 55px; flex: none; background: #fff; display: flex; align-items: center; justify-content: space-between; padding: 0 16px 2px 19px; font-size: 20.500px; color: #555; }
.ph-notice svg { width: 24px; height: 22px; }
.ph-body { flex: 1; padding: 33px 11px 0; min-height: 0; }
.ph-btns { display: flex; gap: 51px; padding-left: 12px; }
.ph-btn { height: 96px; border-radius: 14px; background: #386bf6; color: #fff; display: flex; align-items: center; font-family: "Liberation Serif", "Noto Sans CJK SC", serif; }
.ph-btn-a { width: 271px; padding-left: 18px; gap: 12px; }
.ph-btn-b { width: 249px; padding-left: 33px; gap: 28px; }
.wifi-word { width: 70px; height: 46px; flex: none; margin-top: 2px; }
.person { width: 40px; height: 58px; flex: none; }
.ph-btn-text { display: flex; flex-direction: column; white-space: nowrap; padding-top: 3px; }
.ph-btn-text b { font-size: 25.500px; line-height: 34px; -webkit-text-stroke: .6px #fff; }
.ph-btn-text small { font-size: 16.500px; line-height: 24px; margin-top: 6px; }
.ph-card { margin-top: 33px; height: 126px; background: #fff; border-radius: 14px; padding: 24px 24px 0 23px; }
.ph-card-title { height: 54px; border-bottom: 2px solid #f5f5f5; }
.ph-card-title span { display: block; border-left: 3px solid #386bf6; padding-left: 8px; height: 33px; line-height: 33px; font-size: 25px; font-weight: 700; color: #386bf6; -webkit-text-stroke: .5px #386bf6; }
.ph-tabs { height: 72px; flex: none; background: #fff; display: flex; padding-top: 9px; font-size: 18px; color: #aaa; }
.ph-tab { flex: 1; display: flex; flex-direction: column; align-items: center; }
.ph-tab svg { width: 30px; height: 30px; }
.ph-tab span { line-height: 26px; margin-top: 2px; }
.ph-tab-on { color: #333; }

/* Windows taskbar */
.taskbar { height: 72px; flex: none; position: relative; z-index: 2; border-top: 2px solid #b9bcc6; display: flex; align-items: center; background: linear-gradient(90deg, #dfe6f3 0, #e6e2ee 240px, #f3dfe4 650px, #ecdfe8 900px, #dfe4f0 1300px, #dde5f0 100%); }
.weather { width: 854px; flex: none; display: flex; align-items: center; padding-left: 31px; gap: 13px; }
.weather svg { width: 32px; height: 36px; }
.weather-text { display: flex; flex-direction: column; font-size: 17px; line-height: 24px; color: #333; }
.task-center { display: flex; align-items: center; }
.win-logo { width: 35px; height: 35px; margin-right: 23px; }
.task-search { width: 146px; height: 44px; margin-right: 6px; border-radius: 22px; background: #f5f3f6; box-shadow: 0 1px 2px rgba(0, 0, 0, .1); display: flex; align-items: center; justify-content: center; gap: 6px; font-size: 18px; color: #222; }
.task-search svg { width: 20px; height: 22px; }
.slot { width: 66px; height: 58px; display: flex; align-items: center; justify-content: center; position: relative; }
.slot svg { width: 36px; height: 36px; }
.slot-run::after { content: ""; position: absolute; left: 29px; bottom: 0; width: 8px; height: 5px; border-radius: 3px; background: #777c85; }
.slot-active::before { content: ""; position: absolute; left: 5px; right: 6px; top: 0; bottom: 0; border-radius: 6px; background: #f1f4fa; box-shadow: 0 1px 1px rgba(0, 0, 0, .1); }
.slot-active svg { position: relative; height: 40px; }
.slot-active::after { content: ""; position: absolute; left: 22px; bottom: 1px; width: 23px; height: 5px; border-radius: 3px; background: #0f72cc; }
.tray { margin-left: auto; display: flex; align-items: center; padding-right: 31px; }
.tray-icon { width: 24px; height: 32px; margin-right: 25px; }
.tray-caret { width: 20px; height: 20px; margin-right: 26px; }
.tray-zh { margin-right: 33px; }
.tray-wifi { margin-left: 9px; margin-right: 10px; }
.tray-icon:nth-last-of-type(1) { margin-right: 0; }
.tray-icon:nth-last-of-type(2) { margin-right: 10px; }
.clock { display: flex; flex-direction: column; align-items: flex-end; font-size: 16.500px; line-height: 23px; color: #222; margin-left: 27px; }
.badge { width: 21px; height: 23px; margin-left: 12px; border-radius: 50%; background: #0a63bd; color: #fff; font-size: 15px; display: flex; align-items: center; justify-content: center; }
```
